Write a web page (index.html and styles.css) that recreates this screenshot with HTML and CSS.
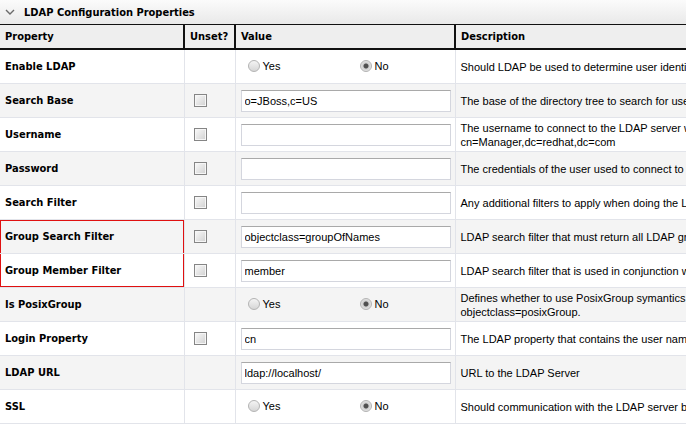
FILE: index.html
```html
<!DOCTYPE html>
<html lang="en">
<head>
    <meta charset="UTF-8">
    <title>LDAP Configuration Properties</title>
    <link rel="stylesheet" href="styles.css">
</head>
<body>
    <div class="section">
        <div class="section-title">
            <svg class="toggle" width="10" height="8" viewBox="0 0 10 8"><polyline points="1,2 5,6 9,2" fill="none" stroke="#6a6a6a" stroke-width="1.4"/></svg>
            <span>LDAP Configuration Properties</span>
        </div>

        <table class="props">
            <colgroup>
                <col class="col-name">
                <col class="col-unset">
                <col class="col-value">
                <col class="col-desc">
            </colgroup>
            <thead>
                <tr>
                    <th>Property</th>
                    <th>Unset?</th>
                    <th>Value</th>
                    <th>Description</th>
                </tr>
            </thead>
            <tbody>
                <tr>
                    <td class="name">Enable LDAP</td>
                    <td></td>
                    <td>
                        <div class="choice">
                            <label><input type="radio" name="ldap-enabled">Yes</label>
                            <label><input type="radio" name="ldap-enabled" checked>No</label>
                        </div>
                    </td>
                    <td class="desc">Should LDAP be used to determine user identity (authentication)?</td>
                </tr>
                <tr class="alt">
                    <td class="name">Search Base</td>
                    <td><input type="checkbox" class="unset"></td>
                    <td><input type="text" class="field" value="o=JBoss,c=US"></td>
                    <td class="desc">The base of the directory tree to search for users (e.g. o=JBoss,c=US)</td>
                </tr>
                <tr>
                    <td class="name">Username</td>
                    <td><input type="checkbox" class="unset"></td>
                    <td><input type="text" class="field" value=""></td>
                    <td class="desc">The username to connect to the LDAP server with, e.g.<br>cn=Manager,dc=redhat,dc=com</td>
                </tr>
                <tr class="alt">
                    <td class="name">Password</td>
                    <td><input type="checkbox" class="unset"></td>
                    <td><input type="text" class="field" value=""></td>
                    <td class="desc">The credentials of the user used to connect to the LDAP server</td>
                </tr>
                <tr>
                    <td class="name">Search Filter</td>
                    <td><input type="checkbox" class="unset"></td>
                    <td><input type="text" class="field" value=""></td>
                    <td class="desc">Any additional filters to apply when doing the LDAP search</td>
                </tr>
                <tr class="alt">
                    <td class="name mark-top">Group Search Filter</td>
                    <td><input type="checkbox" class="unset"></td>
                    <td><input type="text" class="field" value="objectclass=groupOfNames"></td>
                    <td class="desc">LDAP search filter that must return all LDAP groups</td>
                </tr>
                <tr>
                    <td class="name mark-bottom">Group Member Filter</td>
                    <td><input type="checkbox" class="unset"></td>
                    <td><input type="text" class="field" value="member"></td>
                    <td class="desc">LDAP search filter that is used in conjunction with the group search filter</td>
                </tr>
                <tr class="alt">
                    <td class="name">Is PosixGroup</td>
                    <td></td>
                    <td>
                        <div class="choice">
                            <label><input type="radio" name="posix">Yes</label>
                            <label><input type="radio" name="posix" checked>No</label>
                        </div>
                    </td>
                    <td class="desc">Defines whether to use PosixGroup symantics when the group is defined by<br>objectclass=posixGroup.</td>
                </tr>
                <tr>
                    <td class="name">Login Property</td>
                    <td><input type="checkbox" class="unset"></td>
                    <td><input type="text" class="field" value="cn"></td>
                    <td class="desc">The LDAP property that contains the user name</td>
                </tr>
                <tr class="alt">
                    <td class="name">LDAP URL</td>
                    <td></td>
                    <td><input type="text" class="field" value="ldap://localhost/"></td>
                    <td class="desc">URL to the LDAP Server</td>
                </tr>
                <tr>
                    <td class="name">SSL</td>
                    <td></td>
                    <td>
                        <div class="choice">
                            <label><input type="radio" name="ssl">Yes</label>
                            <label><input type="radio" name="ssl" checked>No</label>
                        </div>
                    </td>
                    <td class="desc">Should communication with the LDAP server be done over SSL?</td>
                </tr>
            </tbody>
        </table>
    </div>
</body>
</html>
```

FILE: styles.css
```css
body {
    margin: 0;
    overflow: hidden;
    background: #fff;
    color: #000;
    font-family: "Liberation Sans", Arial, sans-serif;
    font-size: 11px;
}

.section {
    width: 960px;
}

.section-title {
    height: 24px;
    display: flex;
    align-items: center;
    gap: 9px;
    padding-left: 5px;
    background: linear-gradient(#fbfbfb, #e9e9e9);
    font-family: "DejaVu Sans Condensed", "DejaVu Sans", sans-serif;
    font-weight: bold;
    font-size: 11px;
}

.toggle {
    flex: none;
}

.props {
    border-collapse: collapse;
    table-layout: fixed;
    width: 960px;
}

.col-name { width: 184px; }
.col-unset { width: 51px; }
.col-value { width: 220px; }
.col-desc { width: 505px; }

.props th {
    height: 23px;
    padding: 0 5px;
    text-align: left;
    background: #eeeeee;
    border-top: 1px solid #111;
    border-bottom: 2px solid #111;
    border-right: 2px solid #111;
    font-family: "DejaVu Sans Condensed", "DejaVu Sans", sans-serif;
    font-size: 11px;
}

.props th:last-child {
    border-right: none;
}

.props td {
    height: 33px;
    padding: 0 5px;
    border-bottom: 1px solid #e2e4ea;
    border-right: 1px solid #e2e4ea;
    vertical-align: middle;
}

.props tr.alt td {
    background: #f4f4f4;
}

.props td.name {
    font-family: "DejaVu Sans Condensed", "DejaVu Sans", sans-serif;
    font-weight: bold;
}

.props td.desc {
    white-space: nowrap;
    line-height: 14px;
}

/* highlighted pair of property names */
.props td.mark-top {
    box-shadow: inset 1px 0 #e01010, inset -1px 0 #e01010, inset 0 1px #e01010;
}

.props td.mark-bottom {
    box-shadow: inset 1px 0 #e01010, inset -1px 0 #e01010, inset 0 -1px #e01010;
}

.unset {
    appearance: none;
    display: block;
    width: 13px;
    height: 13px;
    margin: 0 0 0 4px;
    border: 1px solid #858585;
    box-shadow: inset 0 0 0 1px #f6f6f6;
    background: linear-gradient(135deg, #fafafa, #d0d0d0);
}

.field {
    display: block;
    box-sizing: border-box;
    width: 210px;
    height: 22px;
    margin: 0;
    padding: 0 3px;
    border: 1px solid #d4d6de;
    border-top-color: #a9a9a9;
    background: #fff;
    font-family: "Liberation Sans", Arial, sans-serif;
    font-size: 11px;
    color: #000;
}

.choice {
    display: flex;
    margin-top: -1px;
}

.choice label {
    flex: none;
    box-sizing: border-box;
    width: 112px;
    display: flex;
    align-items: center;
    gap: 3px;
    padding-left: 7px;
}

.choice input {
    appearance: none;
    width: 12px;
    height: 12px;
    margin: 0;
    border: 1px solid #b4b4b4;
    border-radius: 50%;
    background: linear-gradient(#f4f4f4, #d6d6d6);
}

.choice input:checked {
    background: radial-gradient(circle, #505050 0, #505050 2px, #cfcfcf 3px, #ececec 6px);
}
```
